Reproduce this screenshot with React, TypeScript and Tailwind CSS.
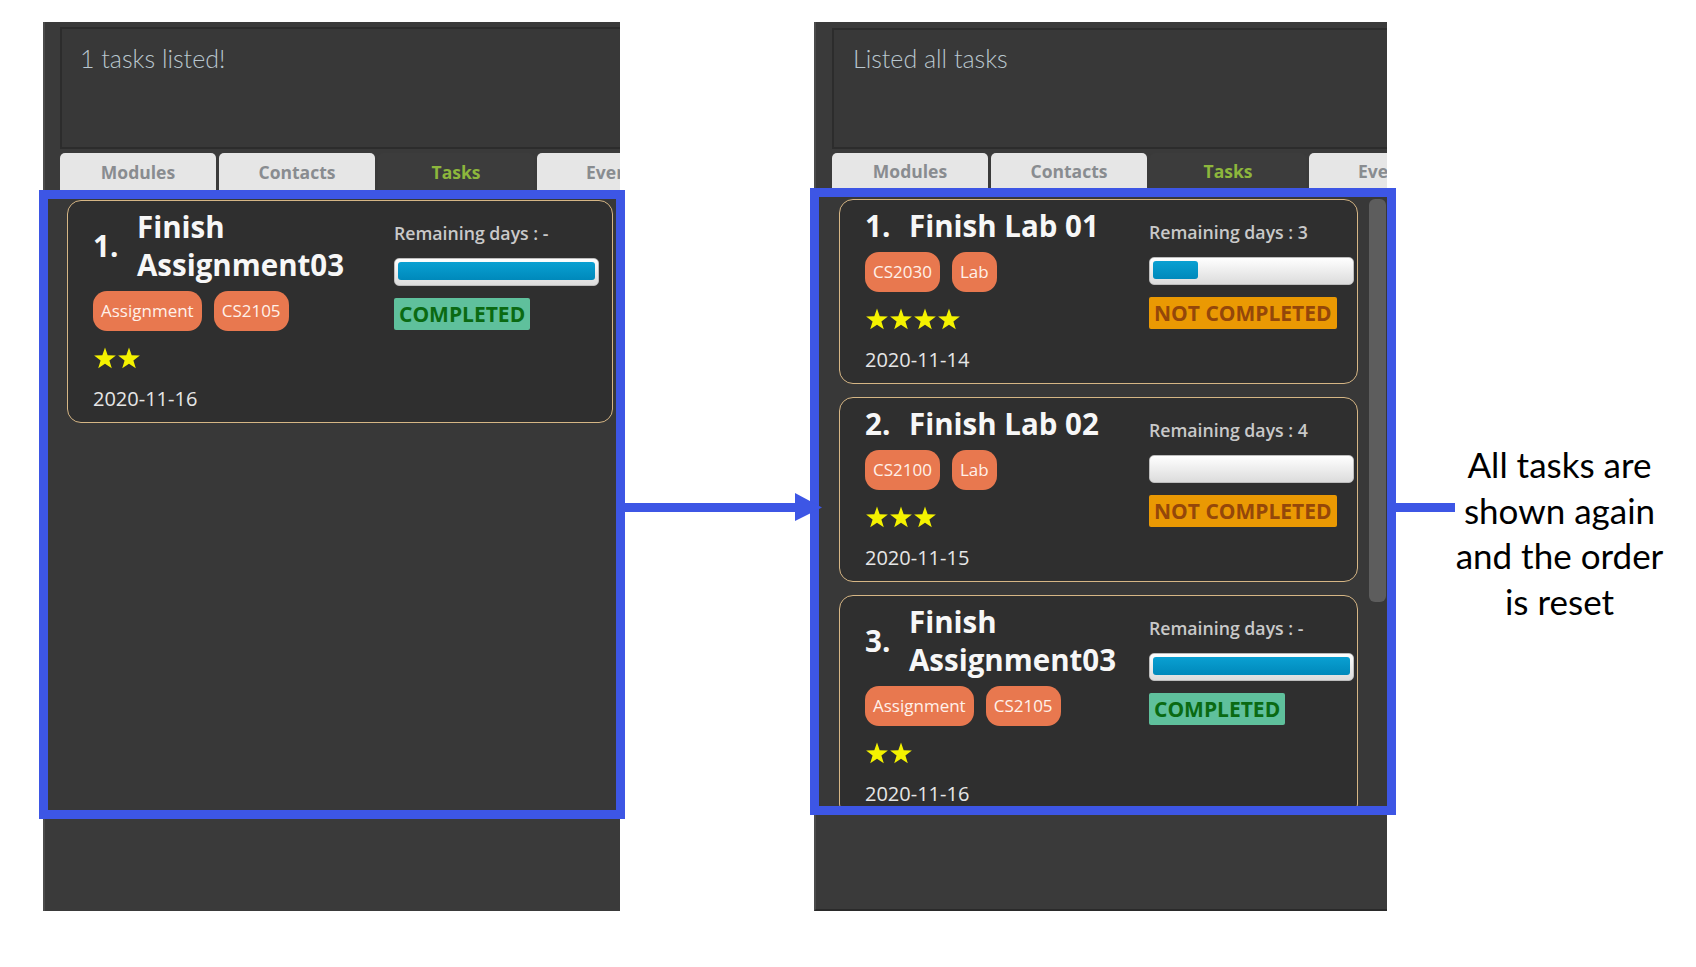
import React from 'react';

type Task = {
  index: number;
  title: string[];
  tags: string[];
  stars: number;
  date: string;
  remaining: string;
  progress: number;
  completed: boolean;
};

const ui = { fontFamily: '"Open Sans", "Noto Sans", sans-serif' };
const lato = { fontFamily: 'Lato, "Open Sans", sans-serif' };

const oneTask: Task[] = [
  { index: 1, title: ['Finish', 'Assignment03'], tags: ['Assignment', 'CS2105'], stars: 2, date: '2020-11-16', remaining: '-', progress: 1, completed: true },
];

const allTasks: Task[] = [
  { index: 1, title: ['Finish Lab 01'], tags: ['CS2030', 'Lab'], stars: 4, date: '2020-11-14', remaining: '3', progress: 0.23, completed: false },
  { index: 2, title: ['Finish Lab 02'], tags: ['CS2100', 'Lab'], stars: 3, date: '2020-11-15', remaining: '4', progress: 0, completed: false },
  { index: 3, title: ['Finish', 'Assignment03'], tags: ['Assignment', 'CS2105'], stars: 2, date: '2020-11-16', remaining: '-', progress: 1, completed: true },
];

function Star() {
  return (
    <svg width="24" height="22" viewBox="0 0 24 23">
      <polygon
        points="12,0.6 14.8,8.7 23.4,8.8 16.6,14 19.1,22.3 12,17.4 4.9,22.3 7.4,14 0.6,8.8 9.2,8.7"
        fill="#f4f200"
      />
    </svg>
  );
}

function ProgressBar({ value }: { value: number }) {
  return (
    <div className="mt-[12px] h-[28px] rounded-[5px] border border-[#bdbdbd] bg-gradient-to-b from-white to-[#dcdcdc] p-[3px] pb-[5px]">
      {value > 0 && (
        <div
          className="h-full rounded-[3px] bg-gradient-to-b from-[#0aa0d2] to-[#0089bb]"
          style={{ width: `${value * 100}%` }}
        />
      )}
    </div>
  );
}

function TaskCard({ task, rightWidth, rightPad }: { task: Task; rightWidth: number; rightPad: string }) {
  return (
    <div className={`flex shrink-0 rounded-[14px] border-[1.5px] border-[#d6b685] bg-[#2f2f2f] ${rightPad}`}>
      <div className="flex-1 pl-[25px] pt-[7px] pb-[9px]">
        <div className="flex items-center text-[29.5px] font-bold leading-[38px] text-[#f7f7f7]">
          <span className="w-[44px] shrink-0">{task.index}.</span>
          <div>
            {task.title.map((line) => (
              <div key={line}>{line}</div>
            ))}
          </div>
        </div>
        <div className="mt-[7px] flex gap-[12px]">
          {task.tags.map((tag) => (
            <span
              key={tag}
              className="flex h-[40px] items-center rounded-[14px] bg-[#e8784f] px-[8px] text-[17px] text-[#fff1ea]"
            >
              {tag}
            </span>
          ))}
        </div>
        <div className="mt-[15px] flex h-[24px] items-center">
          {Array.from({ length: task.stars }).map((_, i) => (
            <Star key={i} />
          ))}
        </div>
        <div className="mt-[15px] text-[20px] leading-[28px] text-[#e6e6e6]">{task.date}</div>
      </div>
      <div className="shrink-0 pt-[19px]" style={{ width: rightWidth }}>
        <div className="text-[17.7px] font-semibold leading-[26px] text-[#c9c9c9]">
          Remaining days : {task.remaining}
        </div>
        <ProgressBar value={task.progress} />
        <div className="mt-[12px]">
          {task.completed ? (
            <span className="inline-block h-[32px] rounded-[2px] bg-[#5fc09c] px-[5px] text-[21px] font-bold leading-[32px] text-[#0a6a12]">
              COMPLETED
            </span>
          ) : (
            <span className="inline-block h-[32px] rounded-[2px] bg-[#ea9903] px-[5px] text-[21px] font-bold leading-[32px] text-[#94470a]">
              NOT COMPLETED
            </span>
          )}
        </div>
      </div>
    </div>
  );
}

function Tabs({ width, height }: { width: number; height: number }) {
  const tabs = ['Modules', 'Contacts', 'Tasks', 'Events'];
  return (
    <div className="mt-[4px] flex gap-[3px] overflow-hidden" style={{ width, height }}>
      {tabs.map((t) => (
        <div
          key={t}
          className={`flex w-[156px] shrink-0 items-center justify-center rounded-t-[5px] pt-[2px] text-[17.5px] font-bold ${
            t === 'Tasks' ? 'bg-[#3c3c3c] text-[#8db63c]' : 'bg-[#e6e6e6] text-[#898c90]'
          }`}
        >
          {t}
        </div>
      ))}
    </div>
  );
}

function ResultBox({ text, className }: { text: string; className: string }) {
  return (
    <div className={`border-2 border-r-0 border-[#2c2c2c] bg-[#383838] ${className}`}>
      <div className="text-[25px] font-light leading-[32px] text-[#b9c6ce]" style={lato}>
        {text}
      </div>
    </div>
  );
}

export default function App() {
  return (
    <div className="min-h-screen bg-white" style={ui}>
      <div className="flex items-start pl-[43px] pt-[22px]">
        {/* before: filtered list */}
        <div className="flex h-[889px] w-[577px] shrink-0 flex-col border-l-2 border-[#4b4b4b] bg-[#3a3a3a]">
          <ResultBox text="1 tasks listed!" className="ml-[15px] mt-[5px] h-[122px] pl-[18px] pt-[13px]" />
          <div className="ml-[15px]">
            <Tabs width={560} height={37} />
          </div>
          <div className="-ml-[6px] h-[629px] w-[586px] border-[9px] border-[#3d56e5] bg-[#383838] pl-[19px] pt-[1px]">
            <div className="w-[546px]">
              {oneTask.map((t) => (
                <TaskCard key={t.index} task={t} rightWidth={205} rightPad="pr-[13px]" />
              ))}
            </div>
          </div>
        </div>

        {/* arrow */}
        <div className="relative z-10 w-[194px] shrink-0">
          <svg className="mt-[468px] overflow-visible" width="202" height="34" viewBox="0 0 202 34">
            <rect x="5" y="13" width="172" height="9" fill="#3d56e5" />
            <polygon points="175,3 202,17.5 175,31" fill="#3d56e5" />
          </svg>
        </div>

        {/* after: all tasks */}
        <div className="flex h-[889px] w-[573px] shrink-0 flex-col border-l-2 border-[#4b4b4b] border-b-2 border-b-[#2a2a2a] bg-[#3a3a3a]">
          <ResultBox text="Listed all tasks" className="ml-[16px] mt-[6px] h-[121px] pl-[19px] pt-[12px]" />
          <div className="ml-[16px]">
            <Tabs width={555} height={35} />
          </div>
          <div className="-ml-[6px] flex h-[627px] w-[586px] overflow-hidden border-[9px] border-[#3d56e5] bg-[#383838] pl-[20px] pt-[2px]">
            <div className="flex w-[519px] shrink-0 flex-col gap-[13px]">
              {allTasks.map((t) => (
                <TaskCard key={t.index} task={t} rightWidth={205} rightPad="pr-[3px]" />
              ))}
            </div>
            <div className="ml-[11px] h-[403px] w-[17px] shrink-0 rounded-[6px] bg-[#5d5d5d]" />
          </div>
        </div>

        {/* annotation */}
        <div className="w-[68px] shrink-0">
          <div className="ml-[9px] mt-[481px] h-[9px] w-[59px] bg-[#3d56e5]" />
        </div>
        <div className="-ml-[8px] mt-[420px] w-[225px] shrink-0 text-center text-[35px] leading-[45.7px] text-black" style={lato}>
          <div>All tasks are</div>
          <div>shown again</div>
          <div>and the order</div>
          <div>is reset</div>
        </div>
      </div>
    </div>
  );
}
